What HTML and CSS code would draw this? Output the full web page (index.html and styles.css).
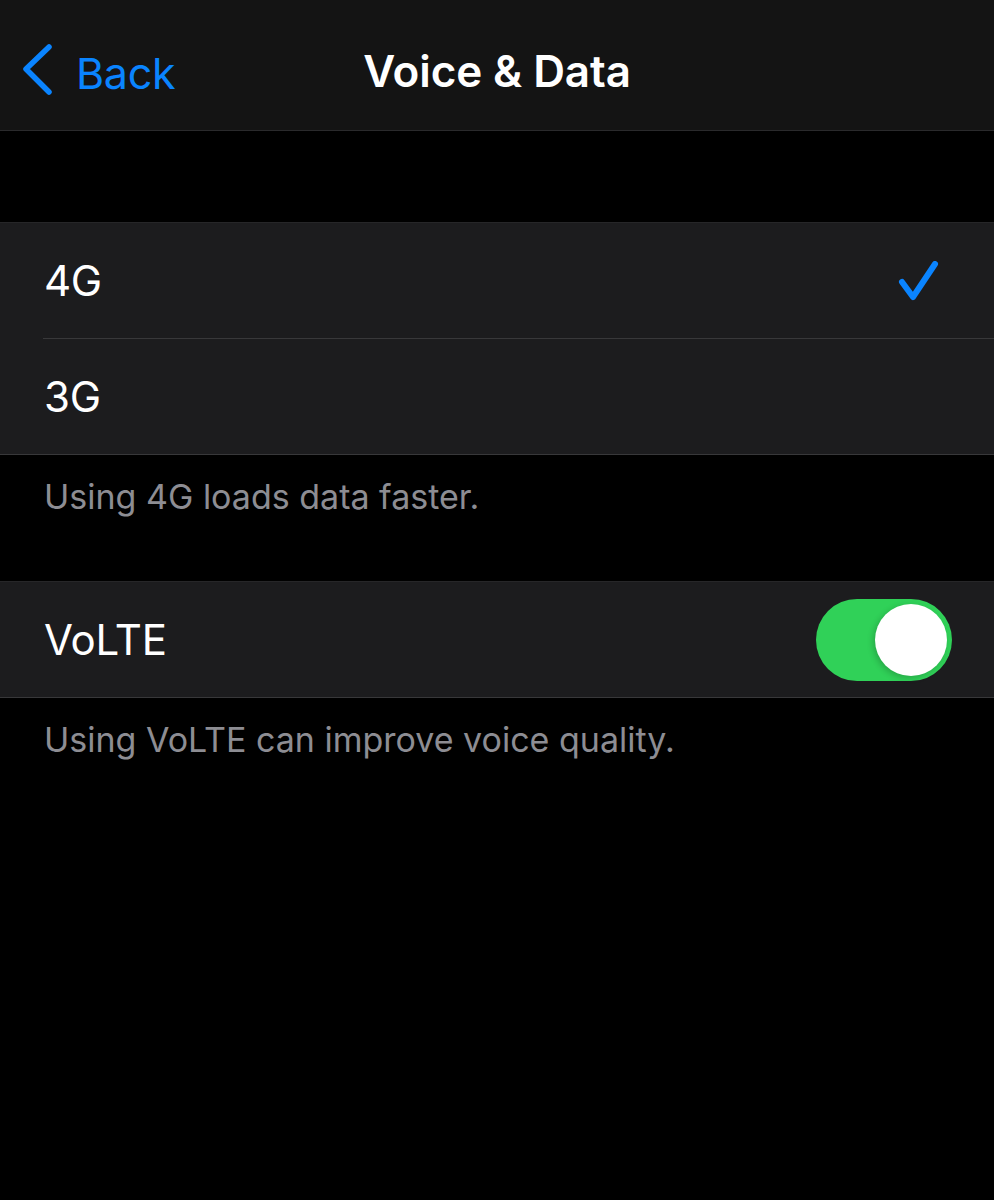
FILE: index.html
```html
<!DOCTYPE html>
<html lang="en">
<head>
<meta charset="utf-8">
<title>Voice &amp; Data</title>
<link rel="stylesheet" href="styles.css">
</head>
<body>
<header class="nav">
  <a class="back" href="#">
    <svg class="chev" width="34" height="56" viewBox="0 0 34 56"><path d="M27 4 L4 26 L27 49" fill="none" stroke="#0a84ff" stroke-width="5.5" stroke-linecap="round" stroke-linejoin="round"/></svg>
    <span>Back</span>
  </a>
  <h1 class="title">Voice &amp; Data</h1>
</header>
<div class="spacer"></div>
<section class="group">
  <div class="row">
    <span class="label">4G</span>
    <svg class="check" width="46" height="46" viewBox="0 0 46 46"><path d="M5 21 L16 36 L38 3" fill="none" stroke="#0a84ff" stroke-width="6" stroke-linecap="round" stroke-linejoin="round"/></svg>
  </div>
  <div class="row sep tall">
    <span class="label">3G</span>
  </div>
</section>
<p class="footer">Using 4G loads data faster.</p>
<section class="group">
  <div class="row">
    <span class="label">VoLTE</span>
    <div class="toggle"><div class="knob"></div></div>
  </div>
</section>
<p class="footer">Using VoLTE can improve voice quality.</p>
</body>
</html>
```
FILE: styles.css
```css
html, body {
  margin: 0;
  padding: 0;
  background: #000;
  font-family: Inter, "Liberation Sans", sans-serif;
  color: #fff;
}
.nav {
  height: 131px;
  box-sizing: border-box;
  background: #141414;
  border-bottom: 1px solid #2a2a2c;
  position: relative;
  display: flex;
  align-items: center;
  justify-content: center;
  padding-top: 12px;
}
.back {
  position: absolute;
  left: 22px;
  top: 43px;
  display: flex;
  align-items: center;
  gap: 20px;
  color: #0a84ff;
  text-decoration: none;
  font-size: 43px;
  letter-spacing: -0.3px;
}
.back span { margin-top: 4px; }
.title {
  margin: 0;
  font-size: 44px;
  font-weight: 600;
  letter-spacing: -0.1px;
}
.spacer { height: 91px; }
.group {
  background: #1c1c1e;
  border-top: 1px solid #262628;
  border-bottom: 1px solid #38383a;
}
.row {
  height: 115px;
  display: flex;
  align-items: center;
  justify-content: space-between;
  padding: 0 42px 0 44px;
  position: relative;
}
.row.tall { height: 116px; }
.row.sep::before {
  content: "";
  position: absolute;
  top: 0;
  left: 43px;
  right: 0;
  border-top: 1px solid #38383a;
}
.label {
  font-size: 42px;
  letter-spacing: -0.3px;
}
.check { margin: 7px 9px 0 0; }
.toggle {
  width: 136px;
  height: 82px;
  border-radius: 41px;
  background: #30d158;
  display: flex;
  align-items: center;
  justify-content: flex-end;
  padding-right: 5px;
  box-sizing: border-box;
}
.knob {
  width: 72px;
  height: 72px;
  border-radius: 50%;
  background: #fff;
  box-shadow: -2px 2px 6px rgba(0,0,0,0.2);
}
.footer {
  margin: 0;
  padding: 21px 44px 63px;
  font-size: 34px;
  line-height: 42px;
  color: #8d8d93;
}
```
